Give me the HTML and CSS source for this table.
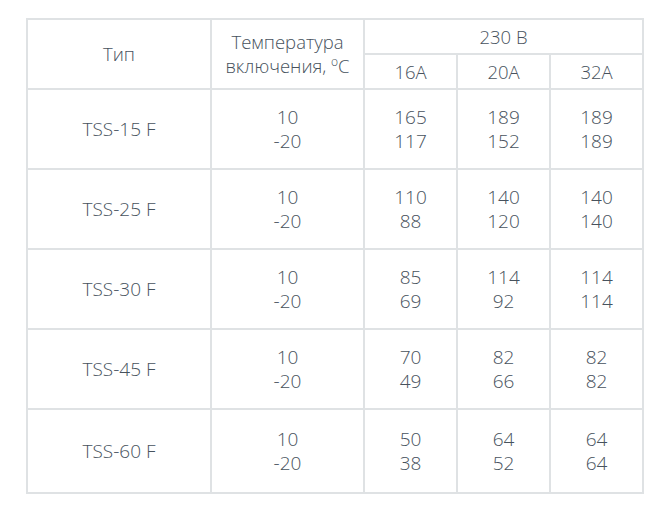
FILE: index.html
```html
<!DOCTYPE html>
<html lang="ru">
<head>
<meta charset="utf-8">
<link rel="stylesheet" href="styles.css">
</head>
<body>
<table class="spec">
  <colgroup>
    <col class="c-type"><col class="c-temp"><col class="c-a"><col class="c-a"><col class="c-a">
  </colgroup>
  <thead>
    <tr class="h1">
      <th rowspan="2">Тип</th>
      <th rowspan="2">Температура<br>включения, <sup>o</sup>C</th>
      <th colspan="3">230 В</th>
    </tr>
    <tr class="h2">
      <th>16А</th><th>20А</th><th>32А</th>
    </tr>
  </thead>
  <tbody>
    <tr><td>TSS-15 F</td><td>10<br>-20</td><td>165<br>117</td><td>189<br>152</td><td>189<br>189</td></tr>
    <tr><td>TSS-25 F</td><td>10<br>-20</td><td>110<br>88</td><td>140<br>120</td><td>140<br>140</td></tr>
    <tr><td>TSS-30 F</td><td>10<br>-20</td><td>85<br>69</td><td>114<br>92</td><td>114<br>114</td></tr>
    <tr><td>TSS-45 F</td><td>10<br>-20</td><td>70<br>49</td><td>82<br>66</td><td>82<br>82</td></tr>
    <tr class="last"><td>TSS-60 F</td><td>10<br>-20</td><td>50<br>38</td><td>64<br>52</td><td>64<br>64</td></tr>
  </tbody>
</table>
</body>
</html>
```
FILE: styles.css
```css
html, body {
  margin: 0;
  padding: 0;
  background: #ffffff;
}
body {
  font-family: "Open Sans", "Liberation Sans", sans-serif;
  color: #47525d;
}
.spec {
  margin: 18px 0 0 26px;
  border-collapse: collapse;
  table-layout: fixed;
  width: 618px;
  font-size: 19px;
  line-height: 24px;
  font-weight: 300;
}
.c-type { width: 184px; }
.c-temp { width: 153px; }
.c-a { width: 93px; }
.spec th, .spec td {
  border: 2px solid #dfe2e4;
  text-align: center;
  vertical-align: middle;
  font-weight: 300;
  padding: 0;
}
.spec th {
  font-size: 18.5px;
}
.h1 th, .h2 th {
  height: 33px;
}
.spec tbody td {
  height: 78px;
}
.spec tbody tr.last td {
  height: 82px;
}
.spec sup {
  font-size: 12px;
  line-height: 0;
  vertical-align: 7px;
}
```
